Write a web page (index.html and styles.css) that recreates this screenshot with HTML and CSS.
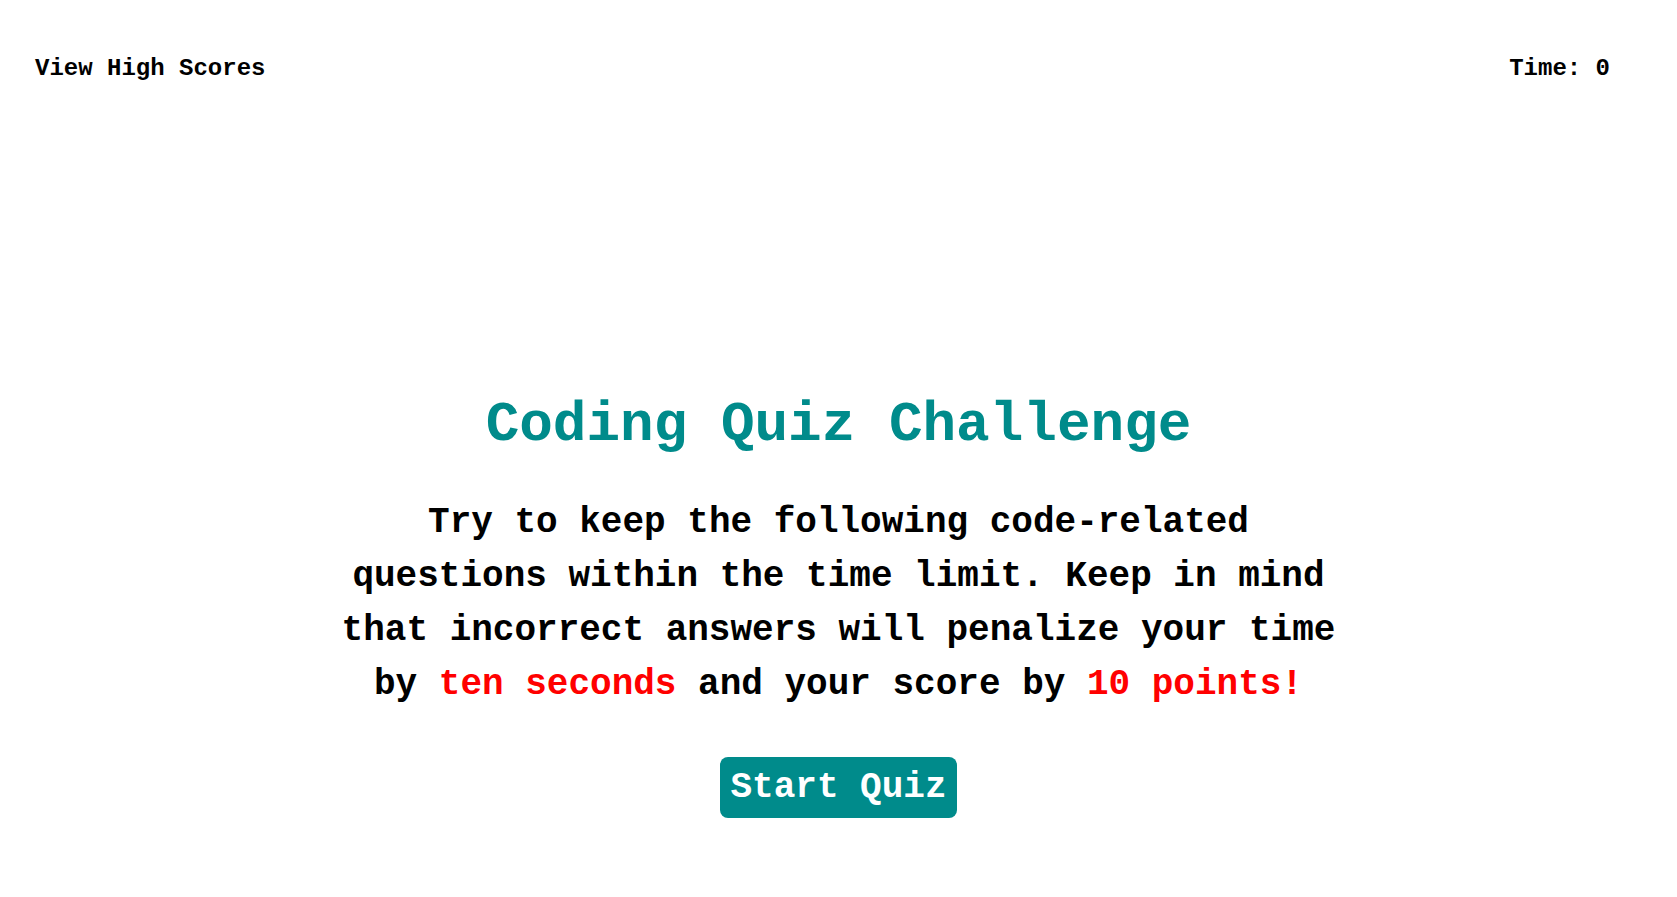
FILE: index.html
```html
<!DOCTYPE html>
<html lang="en">
<head>
<meta charset="utf-8">
<title>Coding Quiz Challenge</title>
<link rel="stylesheet" href="styles.css">
</head>
<body>
<header class="top-bar">
  <a class="high-scores" href="#">View High Scores</a>
  <div class="timer">Time: <span class="time-value">0</span></div>
</header>
<main class="intro">
  <h1 class="title">Coding Quiz Challenge</h1>
  <p class="description">Try to keep the following code-related questions within the time limit. Keep in mind that incorrect answers will penalize your time by <span class="accent">ten seconds</span> and your score by <span class="accent">10 points!</span></p>
  <button class="start-btn" type="button">Start Quiz</button>
</main>
</body>
</html>
```
FILE: styles.css
```css
* { box-sizing: border-box; }
html, body {
  margin: 0;
  padding: 0;
  background: #ffffff;
}
body {
  font-family: "Liberation Mono", "Courier New", monospace;
  font-weight: bold;
  color: #000000;
}
.top-bar {
  display: flex;
  justify-content: space-between;
  align-items: flex-start;
  padding: 55px 67px 0 35px;
  font-size: 24px;
  line-height: 27px;
}
.high-scores {
  color: #000000;
  text-decoration: none;
}
.intro {
  display: flex;
  flex-direction: column;
  align-items: center;
  margin-top: 312px;
}
.title {
  margin: 0;
  font-size: 56px;
  line-height: 63px;
  color: #008b8b;
  font-weight: bold;
}
.description {
  margin: 39px 0 0;
  max-width: 1010px;
  text-align: center;
  font-size: 36px;
  line-height: 54px;
}
.accent { color: #ff0000; }
.start-btn {
  margin-top: 45px;
  font-family: inherit;
  font-weight: bold;
  font-size: 36px;
  line-height: 41px;
  padding: 10px;
  border: none;
  border-radius: 8px;
  background: #008b8b;
  color: #ffffff;
  cursor: pointer;
}
```
